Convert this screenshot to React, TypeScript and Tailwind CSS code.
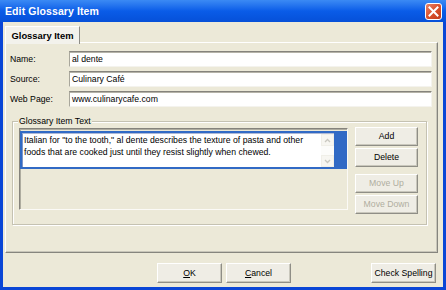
import React from "react";

const font = { fontFamily: '"Liberation Sans", Arial, sans-serif' };

function Btn({ children, disabled, w = "w-[63px]", h = "h-[19px]" }: { children: React.ReactNode; disabled?: boolean; w?: string; h?: string }) {
  return (
    <div
      className={`${w} ${h} flex items-center justify-center bg-[#EFEDE5] border border-t-white border-l-white border-r-[#8f8e86] border-b-[#8f8e86] shadow-[inset_-1px_-1px_0_#c9c7bc] text-[8.7px] leading-none ${disabled ? "text-[#b0ae9f]" : "text-black"}`}
    >
      {children}
    </div>
  );
}

function Field({ label, value }: { label: string; value: string }) {
  return (
    <div className="flex items-center h-[16px]">
      <div className="w-[59px] text-[8.7px] text-black leading-none">{label}</div>
      <div className="w-[363px] h-[16px] bg-white border-t border-l border-t-[#85837c] border-l-[#a9a79c] border-b border-r border-b-[#f4f3ee] border-r-[#f4f3ee] shadow-[inset_0_1px_0_#b5b3a8] flex items-center pl-[2px] text-[8.7px] leading-none text-black">
        {value}
      </div>
    </div>
  );
}

export default function App() {
  return (
    <div className="w-[446px] h-[290px] flex flex-col bg-[#0A46D6] overflow-hidden" style={font}>
      {/* title bar */}
      <div className="h-[22px] flex items-center justify-between pl-[5px] pr-[4px] bg-gradient-to-b from-[#3B8AF4] via-[#0A5CE8] to-[#0650D8]">
        <div className="text-white font-bold text-[10.5px] leading-none tracking-[0.1px]">Edit Glossary Item</div>
        <div className="w-[17px] h-[17px] rounded-[3px] border border-white bg-gradient-to-br from-[#E8826A] via-[#D9502B] to-[#C23C1C] flex items-center justify-center">
          <svg width="11" height="11" viewBox="0 0 11 11">
            <path d="M1.5 1.5 L9.5 9.5 M9.5 1.5 L1.5 9.5" stroke="white" strokeWidth="2" strokeLinecap="square" />
          </svg>
        </div>
      </div>
      {/* client */}
      <div className="flex-1 mx-[3px] mb-[3px] bg-[#ECE9D8] flex flex-col">
        {/* tab row */}
        <div className="h-[21px] pt-[4px] pl-[2px] flex">
          <div className="w-[75px] h-[18px] bg-[#F3F2EC] border-t border-l border-r border-t-white border-l-white border-r-[#8e8d86] flex items-center justify-center text-[9.4px] font-bold leading-none text-black relative z-10">
            Glossary Item
          </div>
        </div>
        {/* panel */}
        <div className="ml-[2px] w-[433px] h-[211px] border border-t-white border-l-white border-r-[#86857e] border-b-[#86857e] shadow-[inset_-1px_-1px_0_#c8c6ba] -mt-[1px] flex flex-col pl-[4px] pt-[8px]">
          <div className="flex flex-col gap-[4px]">
            <Field label="Name:" value="al dente" />
            <Field label="Source:" value="Culinary Café" />
            <Field label="Web Page:" value="www.culinarycafe.com" />
          </div>
          {/* group box */}
          <div className="relative mt-[14px] ml-[2px] w-[415px] h-[104px] border border-[#c5c2b2] shadow-[inset_1px_1px_0_white,1px_1px_0_white] flex pl-[6px] pt-[5px]">
            <div className="absolute -top-[6px] left-[5px] px-[1px] bg-[#ECE9D8] text-[8.7px] leading-[11px] text-black">Glossary Item Text</div>
            {/* list box */}
            <div className="w-[329px] h-[82px] mt-[1px] border-t border-l border-t-[#85837c] border-l-[#85837c] border-b border-r border-b-[#fbfaf6] border-r-[#fbfaf6] shadow-[inset_1px_1px_0_#aeac9f] pt-[2px] pl-[0px]">
              <div className="w-[327px] h-[38px] bg-[#316AC5] pt-[2px] pl-[2px]">
                <div className="w-[312px] h-[34px] bg-white flex border-t border-l border-t-[#aeb9d6] border-l-[#7d95c8]">
                  <div className="flex-1 pl-[1px] pt-[1px] text-[8.7px] leading-[11.5px] text-black">
                    Italian for "to the tooth," al dente describes the texture of pasta and other foods that are cooked just until they resist slightly when chewed.
                  </div>
                  <div className="w-[13px] flex flex-col bg-[#FAFAF6]">
                    <div className="h-[12px] flex items-center justify-center border border-[#f0efe8] bg-[#F7F6F1]">
                      <svg width="7" height="5" viewBox="0 0 7 5"><path d="M1 4 L3.5 1.5 L6 4" stroke="#c9c8c0" strokeWidth="1.3" fill="none" /></svg>
                    </div>
                    <div className="flex-1 bg-[#FCFCFA]" />
                    <div className="h-[12px] flex items-center justify-center border border-[#f0efe8] bg-[#F7F6F1]">
                      <svg width="7" height="5" viewBox="0 0 7 5"><path d="M1 1 L3.5 3.5 L6 1" stroke="#c9c8c0" strokeWidth="1.3" fill="none" /></svg>
                    </div>
                  </div>
                </div>
              </div>
            </div>
            {/* side buttons */}
            <div className="ml-[7px] flex flex-col gap-[2px]">
              <Btn>Add</Btn>
              <Btn>Delete</Btn>
              <div className="h-[3px]" />
              <Btn disabled>Move Up</Btn>
              <Btn disabled>Move Down</Btn>
            </div>
          </div>
        </div>
        {/* bottom buttons */}
        <div className="flex mt-[10px] pl-[154px]">
          <Btn w="w-[65px]" h="h-[20px]"><span><span className="underline">O</span>K</span></Btn>
          <div className="w-[4px]" />
          <Btn w="w-[65px]" h="h-[20px]"><span><span className="underline">C</span>ancel</span></Btn>
          <div className="w-[80px]" />
          <Btn w="w-[65px]" h="h-[20px]">Check Spelling</Btn>
        </div>
      </div>
    </div>
  );
}
